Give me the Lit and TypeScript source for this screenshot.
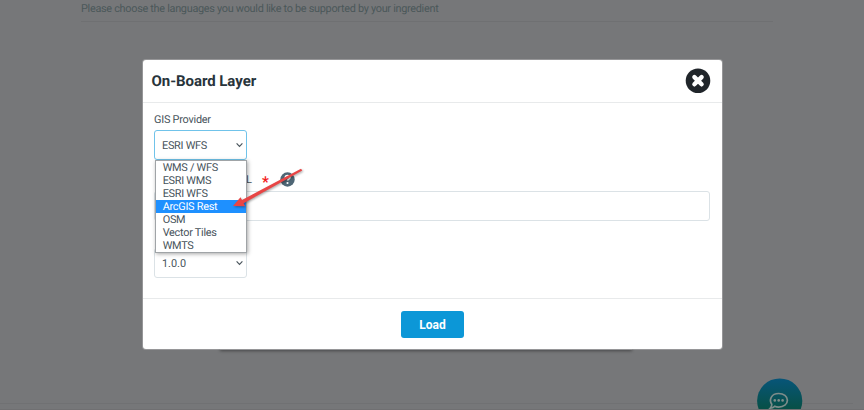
import { LitElement, html, css } from "lit";
import { customElement } from "lit/decorators.js";

const OPTIONS = ["WMS / WFS", "ESRI WMS", "ESRI WFS", "ArcGIS Rest", "OSM", "Vector Tiles", "WMTS"];
const ACTIVE = "ArcGIS Rest";

@customElement("select-box")
class SelectBox extends LitElement {
  static properties = { value: {}, focused: { type: Boolean } };
  declare value: string;
  declare focused: boolean;
  static styles = css`
    :host { display: block; width: 93px; }
    .box {
      box-sizing: border-box; height: 30px; border: 1px solid #dbe2e6; border-radius: 3px;
      display: flex; align-items: center; justify-content: space-between;
      padding: 0 3px 0 7px; font-size: 10.9px; letter-spacing: -0.27px; color: #46525a; background: #fff;
    }
    .number { letter-spacing: 0; }
    .focused { border-color: #70c3ea; }
  `;
  render() {
    return html`<div class="box ${this.focused ? "focused" : "number"}">
      <span>${this.value}</span>
      <svg width="7" height="6" viewBox="0 0 7 6"><path d="M.6 1.400 3.500 4.300 6.400 1.400" fill="none" stroke="#4a555c" stroke-width="1.200"/></svg>
    </div>`;
  }
}

@customElement("app-root")
class AppRoot extends LitElement {
  static styles = css`
    :host {
      display: block; position: relative; width: 864px; height: 410px; overflow: hidden;
      background: #767779; font-family: Roboto, "Liberation Sans", sans-serif; color: #46525a;
      text-rendering: geometricPrecision;
    }
    .intro {
      box-sizing: border-box; margin-left: 81px; width: 692px; height: 22px; border-bottom: 1px solid #6f7072;
      font-size: 10.9px; letter-spacing: -0.3px; line-height: 17px; color: #4b5859; white-space: nowrap;
    }
    .back-card {
      position: absolute; left: 220px; top: 300px; width: 412px; height: 50px;
      box-shadow: 0 1px 3px rgba(0, 0, 0, 0.4);
    }
    .page-rule { position: absolute; left: 0; top: 403px; width: 853px; height: 1px; background: #707173; }
    .page-end { position: absolute; left: 0; top: 409px; width: 864px; height: 1px; background: #707072; }
    .chat { position: absolute; left: 757px; top: 378px; }
    .modal {
      position: absolute; left: 143px; top: 60px; width: 579px; height: 289px; box-sizing: border-box;
      background: #fff; border-radius: 3px; display: flex; flex-direction: column;
      box-shadow: 0 0 0 1px #b5b6b780;
    }
    .head {
      height: 43px; box-sizing: border-box; border-bottom: 1px solid #e8eaeb; flex: none;
      display: flex; align-items: center; justify-content: space-between; padding: 0 11px 0 8.5px;
    }
    h1 { margin: 0; font-size: 15px; line-height: 18px; font-weight: 700; color: #28343b; letter-spacing: -0.05px; }
    .close { display: block; }
    .body { flex: 1; padding: 0 12px 0 11px; display: flex; flex-direction: column; }
    .label { height: 27px; line-height: 33px; font-size: 10.9px; letter-spacing: -0.24px; flex: none; }
    .row { height: 31px; display: flex; align-items: center; flex: none; padding-top: 8px; box-sizing: border-box; }
    .url-label { width: 98px; text-align: right; font-size: 11px; }
    .star { color: #f31919; font-weight: 700; font-size: 15px; line-height: 13px; width: 7px; margin-left: 10px; padding-top: 5px; }
    .help { margin-left: 11px; }
    .input { height: 30px; box-sizing: border-box; border: 1px solid #dbe2e6; border-radius: 3px; margin-bottom: 27px; flex: none; }
    .foot {
      height: 51px; box-sizing: border-box; border-top: 1px solid #e8eaeb; flex: none;
      display: flex; align-items: center; justify-content: center;
    }
    button {
      width: 63px; height: 27px; border: 0; border-radius: 3px; background: #0c97d7; color: #fff;
      font: 700 12px Roboto, sans-serif; padding: 0; margin-top: 1px;
    }
    .menu {
      position: absolute; left: 12px; top: 100px; width: 92px; height: 93px; box-sizing: border-box;
      border: 1px solid #a0a4a7; background: #fff; margin: 0; padding: 0; list-style: none;
      box-shadow: 1px 1px 4px rgba(0, 0, 0, 0.35);
    }
    .menu li { height: 13px; line-height: 13px; padding-left: 6.7px; font-size: 10.9px; letter-spacing: -0.27px; }
    .menu .active { background: #1e90ff; color: #fff; }
    .arrow { position: absolute; left: 85px; top: 104px; filter: drop-shadow(1px 1px 1px rgba(0, 0, 0, 0.35)); }
  `;

  render() {
    return html`
      <div class="intro">Please choose the languages you would like to be supported by your ingredient</div>
      <div class="back-card"></div>
      <div class="page-rule"></div>
      <svg class="chat" width="46" height="32" viewBox="0 0 46 32">
        <defs><linearGradient id="g" x1="0" y1="0" x2="0" y2="1"><stop offset="0" stop-color="#075579"/><stop offset=".65" stop-color="#075048"/></linearGradient></defs>
        <circle cx="22.700" cy="23" r="22.600" fill="url(#g)"/>
        <path d="M14.800 26.200C11.800 22 14 15.500 21.700 15.500c5 0 8.700 2.900 8.700 6.800s-3.700 6.800-8.700 6.800c-1.600 0-2.800-.2-4-.8-1.200 1.200-2.700 1.900-4.500 1.900 1-1.100 1.700-2.500 1.600-4Z" fill="none" stroke="#7d8c8a" stroke-width="1.700"/>
        <g fill="#7d8c8a"><circle cx="17.800" cy="22.400" r="1.300"/><circle cx="21.700" cy="22.400" r="1.300"/><circle cx="25.600" cy="22.400" r="1.300"/></g>
      </svg>
      <div class="page-end"></div>
      <section class="modal">
        <header class="head">
          <h1>On-Board Layer</h1>
          <svg class="close" width="26" height="26" viewBox="0 0 26 26"><circle cx="13" cy="12.700" r="12.300" fill="#20252a"/><path d="M9.400 9.100l7.200 7.200M16.600 9.100l-7.200 7.200" stroke="#fff" stroke-width="4.400" stroke-linecap="round"/></svg>
        </header>
        <div class="body">
          <div class="label">GIS Provider</div>
          <select-box value="ESRI WFS" focused></select-box>
          <div class="row">
            <span class="url-label">URL</span><span class="star">*</span>
            <svg class="help" width="15" height="15" viewBox="0 0 15 15"><circle cx="7.500" cy="7.500" r="7.200" fill="#4e6675"/><path d="M5.300 5.900c0-3.200 4.600-3 4.600-.4 0 1.700-2.300 1.600-2.300 3.100" fill="none" stroke="#fff" stroke-width="1.700"/><circle cx="7.500" cy="11" r="1.050" fill="#fff"/></svg>
          </div>
          <div class="input"></div>
          <select-box value="1.0.0"></select-box>
        </div>
        <footer class="foot"><button>Load</button></footer>
        <ul class="menu">${OPTIONS.map((o) => html`<li class=${o === ACTIVE ? "active" : ""}>${o}</li>`)}</ul>
        <svg class="arrow" width="78" height="46" viewBox="0 0 78 46">
          <path d="M5 42 12.500 33.200 14 36 73 4.700 74.300 6.600 15.600 39.300 17.200 42.200Z" fill="#e84545"/>
        </svg>
      </section>
    `;
  }
}
